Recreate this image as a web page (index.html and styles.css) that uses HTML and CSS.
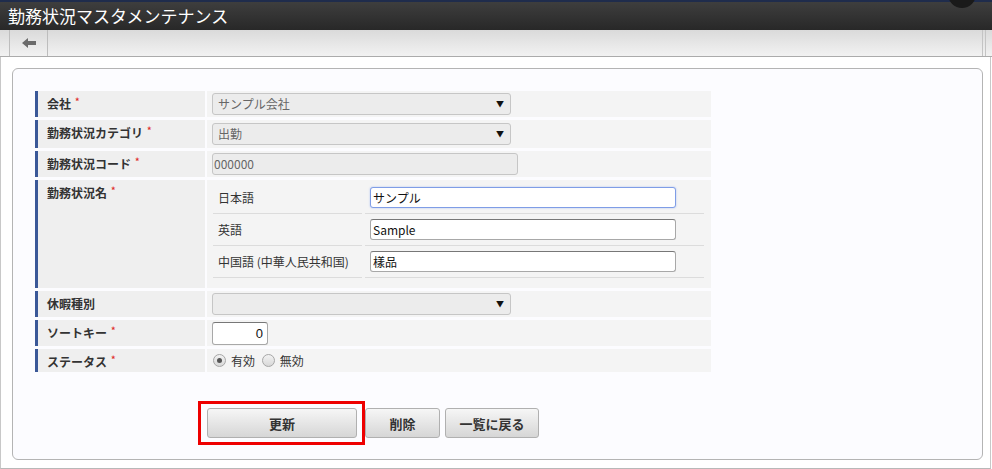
FILE: index.html
```html
<!DOCTYPE html>
<html lang="ja">
<head>
  <meta charset="UTF-8">
  <title>勤務状況マスタメンテナンス</title>
  <link rel="stylesheet" href="styles.css">
</head>
<body>

  <header class="titlebar">
    <h1>勤務状況マスタメンテナンス</h1>
    <span class="avatar"></span>
  </header>

  <div class="toolbar">
    <span class="tool-pad"></span>
    <button class="back-btn" title="戻る">
      <svg width="14" height="10" viewBox="0 0 14 10">
        <path d="M0 5 L6 0 L6 3 L14 3 L14 7 L6 7 L6 10 Z" fill="#6b6b6b"/>
      </svg>
    </button>
    <span class="tool-end"></span>
  </div>

  <div class="page">
    <div class="panel">
      <table class="form">
        <tr class="r1">
          <th>会社<span class="req">*</span></th>
          <td>
            <div class="select disabled">サンプル会社<span class="arrow">▼</span></div>
          </td>
        </tr>
        <tr class="r2">
          <th>勤務状況カテゴリ<span class="req">*</span></th>
          <td>
            <div class="select disabled">出勤<span class="arrow">▼</span></div>
          </td>
        </tr>
        <tr class="r3">
          <th>勤務状況コード<span class="req">*</span></th>
          <td><div class="text disabled code">000000</div></td>
        </tr>
        <tr class="r4">
          <th>勤務状況名<span class="req">*</span></th>
          <td>
            <table class="names">
              <tr>
                <td class="lang">日本語</td>
                <td><input type="text" class="name-input focus" value="サンプル"></td>
              </tr>
              <tr>
                <td class="lang">英語</td>
                <td><input type="text" class="name-input" value="Sample"></td>
              </tr>
              <tr>
                <td class="lang">中国語 (中華人民共和国)</td>
                <td><input type="text" class="name-input" value="樣品"></td>
              </tr>
            </table>
          </td>
        </tr>
        <tr class="r5">
          <th>休暇種別</th>
          <td>
            <div class="select disabled"><span class="arrow">▼</span></div>
          </td>
        </tr>
        <tr class="r6">
          <th>ソートキー<span class="req">*</span></th>
          <td><input type="text" class="sort-input" value="0"></td>
        </tr>
        <tr class="r7">
          <th>ステータス<span class="req">*</span></th>
          <td>
            <label class="radio"><span class="dot on"></span>有効</label>
            <label class="radio"><span class="dot"></span>無効</label>
          </td>
        </tr>
      </table>

      <div class="buttons">
        <span class="highlight-wrap">
          <button class="btn btn-update">更新</button>
          <span class="highlight"></span>
        </span>
        <button class="btn btn-delete">削除</button>
        <button class="btn btn-back">一覧に戻る</button>
      </div>
    </div>
  </div>

</body>
</html>
```

FILE: styles.css
```css
body {
  margin: 0;
  width: 992px;
  height: 469px;
  overflow: hidden;
  font-family: "Noto Sans CJK JP", "Liberation Sans", sans-serif;
  font-size: 12px;
  color: #333;
  background: #fff;
}

/* ===== タイトル ===== */
.titlebar {
  position: relative;
  height: 28px;
  border-top: 2px solid #1f2c4c;
  background: linear-gradient(to bottom, #3e3e3e, #282828);
}

.titlebar h1 {
  margin: 0;
  padding-left: 8px;
  font-size: 17px;
  font-weight: normal;
  line-height: 27px;
  color: #fff;
}

.avatar {
  position: absolute;
  top: -22px;
  left: 948px;
  width: 28px;
  height: 28px;
  border-radius: 50%;
  background: #1a1a1a;
}

/* ===== ツールバー ===== */
.toolbar {
  display: flex;
  height: 26px;
  border-bottom: 1px solid #ababab;
  background: linear-gradient(to bottom, #dadada, #f2f2f2);
}

.tool-pad {
  width: 9px;
}

.back-btn {
  width: 39px;
  height: 26px;
  padding: 0;
  border: none;
  border-left: 1px solid #bdbdbd;
  border-right: 1px solid #bdbdbd;
  background: transparent;
  display: flex;
  align-items: center;
  justify-content: center;
}

.tool-end {
  margin-left: auto;
  margin-right: 6px;
  width: 2px;
  border-left: 1px solid #c4c4c4;
  border-right: 1px solid #c4c4c4;
}

/* ===== ページ ===== */
.page {
  width: 991px;
  height: 412px;
  box-sizing: border-box;
  padding: 11px 0 0 11px;
  border-left: 1px solid #c8c8c8;
  border-right: 1px solid #c8c8c8;
  border-bottom: 1px solid #b8b8b8;
}

.panel {
  width: 971px;
  height: 392px;
  box-sizing: border-box;
  padding: 22px 0 0 22px;
  border: 1px solid #b4b4b4;
  border-radius: 6px;
  background: #fcfcff;
}

/* ===== フォーム ===== */
.form {
  border-collapse: separate;
  border-spacing: 2px 3px;
  margin: -3px 0 0 -2px;
  width: 680px;
}

.form th {
  width: 158px;
  padding: 4px 0 0 9px;
  text-align: left;
  vertical-align: top;
  font-weight: bold;
  font-size: 12px;
  color: #333;
  background: #efefef;
  border-left: 3px solid #3a5898;
}

.form > tbody > tr > td {
  padding: 0 0 0 5px;
  background: #f4f4f4;
  vertical-align: middle;
}

.req {
  margin-left: 4px;
  color: #e03030;
  font-size: 9px;
  vertical-align: top;
}

.r1 td, .r3 td, .r5 td { height: 26px; }
.r2 td { height: 28px; }
.r6 td { height: 26px; }
.r7 td { height: 23px; }

.select {
  position: relative;
  width: 292px;
  height: 20px;
  line-height: 20px;
  padding-left: 5px;
  border: 1px solid #c6c6c6;
  border-radius: 3px;
  background: #ececec;
  color: #666;
}

.select .arrow {
  position: absolute;
  right: 6px;
  top: 0;
  font-size: 8px;
  color: #111;
}

.text.code {
  width: 303px;
  height: 20px;
  line-height: 20px;
  padding-left: 1px;
  border: 1px solid #c6c6c6;
  border-radius: 3px;
  background: #ececec;
  color: #666;
}

/* ===== 名称 ===== */
.names {
  border-collapse: separate;
  border-spacing: 3px 0;
  margin: 2px 0 10px -2px;
}

.names td {
  height: 29px;
  border-bottom: 1px solid #dcdcdc;
  vertical-align: middle;
}

.names .lang {
  width: 143px;
  padding-left: 5px;
  font-size: 12px;
  color: #333;
}

.names td + td {
  width: 333px;
  padding-left: 5px;
}

.name-input {
  display: block;
  width: 306px;
  height: 21px;
  box-sizing: border-box;
  padding: 0 2px;
  border: 1px solid #a8a8a8;
  border-top-color: #777;
  border-radius: 3px;
  background: #fff;
  font-family: "Noto Sans CJK JP", "Liberation Sans", sans-serif;
  font-size: 12px;
  color: #111;
}

.name-input.focus {
  border: 1px solid #7f9de6;
  box-shadow: 0 0 2px #a8bdf0;
}

.sort-input {
  display: block;
  width: 56px;
  height: 23px;
  box-sizing: border-box;
  padding: 0 4px;
  text-align: right;
  border: 1px solid #a8a8a8;
  border-top-color: #777;
  border-radius: 3px;
  font-family: "Liberation Sans", sans-serif;
  font-size: 13px;
  color: #111;
}

.radio {
  display: inline-flex;
  align-items: center;
  margin-right: 3px;
  color: #333;
}

.dot {
  position: relative;
  display: inline-block;
  width: 11px;
  height: 11px;
  margin: 0 5px 0 1px;
  border: 1px solid #a6a6a6;
  border-radius: 50%;
  background: linear-gradient(to bottom, #f2f2f2, #d8d8d8);
}

.dot.on::after {
  content: "";
  position: absolute;
  left: 3px;
  top: 3px;
  width: 5px;
  height: 5px;
  border-radius: 50%;
  background: #555;
}

/* ===== ボタン ===== */
.buttons {
  display: flex;
  gap: 5px;
  margin: 33px 0 0 172px;
}

.highlight-wrap {
  position: relative;
  display: inline-block;
}

.highlight {
  position: absolute;
  left: -9px;
  top: -7px;
  width: 161px;
  height: 38px;
  border: 3px solid #ee0000;
}

.btn {
  height: 30px;
  border: 1px solid #b0b0b0;
  border-radius: 3px;
  background: linear-gradient(to bottom, #f6f6f6, #d6d6d6);
  font-family: "Noto Sans CJK JP", "Liberation Sans", sans-serif;
  font-size: 13px;
  font-weight: bold;
  color: #333;
  cursor: pointer;
}

.btn-update { width: 150px; }
.btn-delete { width: 75px; margin-left: 3px; }
.btn-back { width: 94px; }
```
